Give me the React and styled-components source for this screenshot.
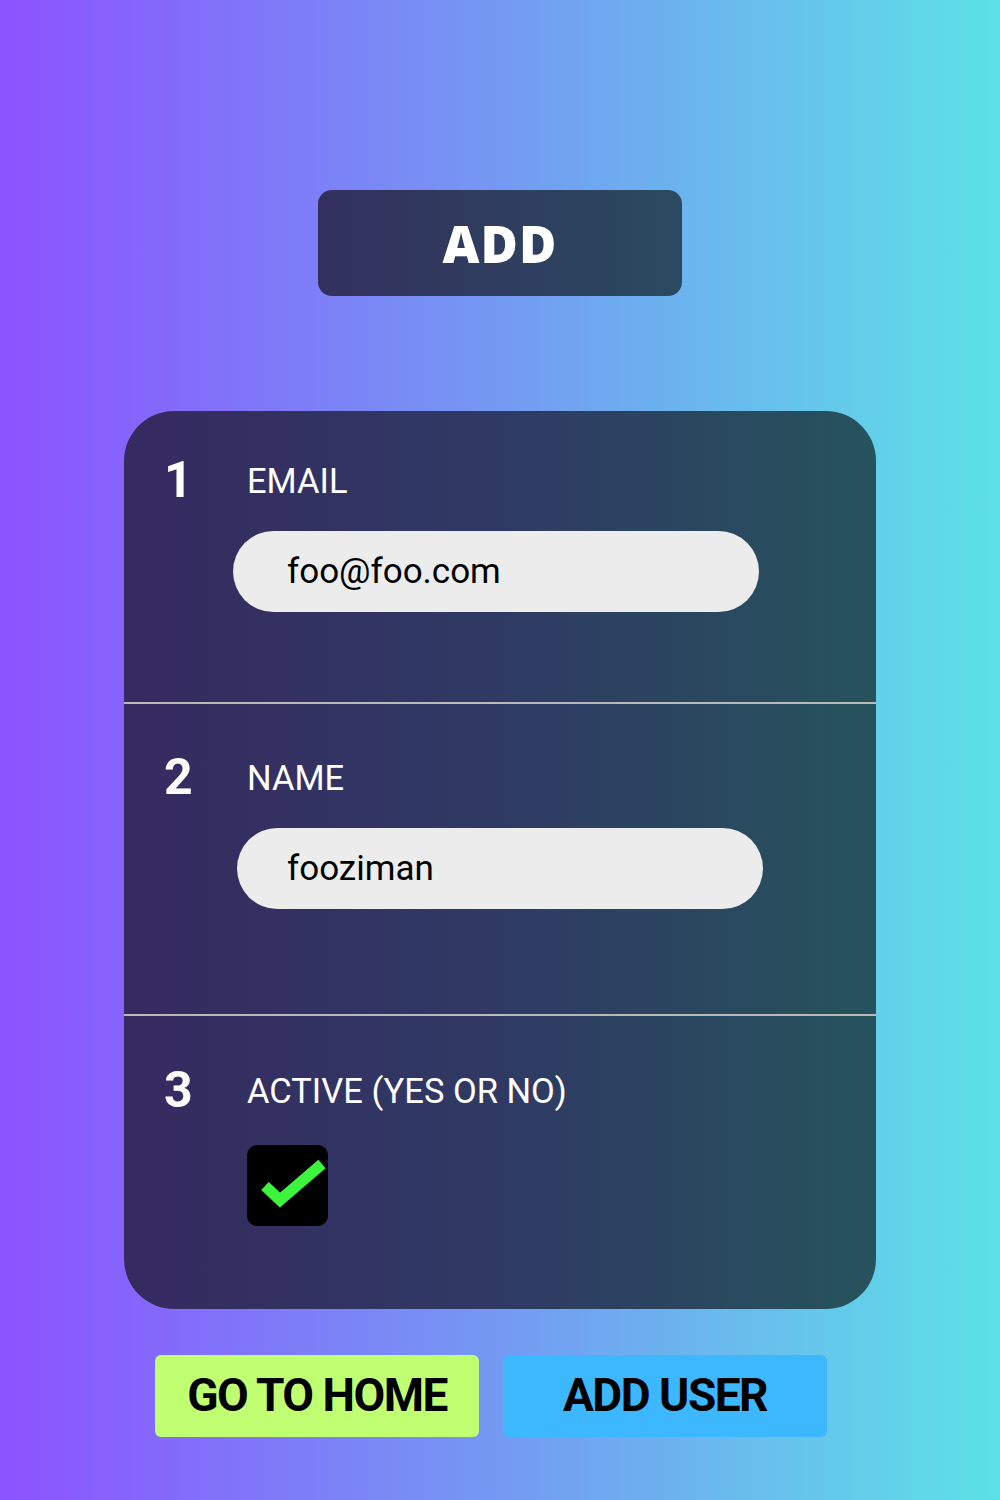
import styled, { createGlobalStyle } from "styled-components";

const GlobalStyle = createGlobalStyle`
  html, body {
    margin: 0;
    padding: 0;
  }
  body {
    font-family: Roboto, "Liberation Sans", sans-serif;
  }
`;

const fields = [
  { num: "1", label: "EMAIL", value: "foo@foo.com", pad: 44, height: 293, inputShift: 0 },
  { num: "2", label: "NAME", value: "fooziman", pad: 48, height: 312, inputShift: 4 },
];

const App = () => {
  return (
    <Page>
      <GlobalStyle />
      <TitleBox>ADD</TitleBox>
      <Card>
        {fields.map((f) => (
          <Section key={f.num} $pad={f.pad} $height={f.height} $divider>
            <Header>
              <Num>{f.num}</Num>
              <Label>{f.label}</Label>
            </Header>
            <Input $shift={f.inputShift} defaultValue={f.value} />
          </Section>
        ))}
        <Section $pad={49} $height={293}>
          <Header>
            <Num>3</Num>
            <Label>ACTIVE (YES OR NO)</Label>
          </Header>
          <CheckBox>
            <svg width="81" height="81" viewBox="0 0 81 81">
              <polyline
                points="18,41 33,55 75,19"
                fill="none"
                stroke="#3df53d"
                strokeWidth="11"
                strokeLinejoin="miter"
              />
            </svg>
          </CheckBox>
        </Section>
      </Card>
      <Actions>
        <ActionButton $bg="#c1ff72">GO TO HOME</ActionButton>
        <ActionButton $bg="#3db8ff">ADD USER</ActionButton>
      </Actions>
    </Page>
  );
};

export default App;

const Page = styled.div`
  width: 1000px;
  height: 1500px;
  box-sizing: border-box;
  padding-top: 190px;
  display: flex;
  flex-direction: column;
  align-items: center;
  background: linear-gradient(90deg, #8c52ff 0%, #5ce1e6 100%);
  overflow: hidden;
`;

const TitleBox = styled.div`
  width: 364px;
  height: 106px;
  border-radius: 14px;
  background: linear-gradient(90deg, #33305e, #2b4a60);
  display: flex;
  align-items: center;
  justify-content: center;
  color: #fff;
  font-family: "Open Sans", sans-serif;
  font-weight: 800;
  font-size: 51px;
  letter-spacing: 1px;
`;

const Card = styled.div`
  margin-top: 115px;
  width: 752px;
  border-radius: 50px;
  background: linear-gradient(90deg, #362a60 0%, #2f3a64 50%, #26535c 100%);
  display: flex;
  flex-direction: column;
  overflow: hidden;
`;

const Section = styled.div`
  box-sizing: border-box;
  height: ${(p) => p.$height}px;
  padding: ${(p) => p.$pad}px 40px 0 40px;
  border-bottom: ${(p) => (p.$divider ? "2px solid #b9b9b9" : "none")};
  display: flex;
  flex-direction: column;
  gap: 26px;
`;

const Header = styled.div`
  display: flex;
  align-items: flex-start;
  height: 50px;
`;

const Num = styled.div`
  width: 83px;
  font-size: 50px;
  line-height: 50px;
  font-weight: 700;
  color: #fff;
`;

const Label = styled.div`
  margin-top: 6px;
  font-size: 34.5px;
  line-height: 40px;
  color: #fff;
`;

const Input = styled.input`
  box-sizing: border-box;
  margin-left: ${(p) => 69 + p.$shift}px;
  width: 526px;
  height: 81px;
  border: none;
  outline: none;
  border-radius: 41px;
  background: #ececec;
  padding: 0 0 0 ${(p) => 54 - p.$shift}px;
  font-family: Roboto, sans-serif;
  font-size: 35px;
  color: #000;
`;

const CheckBox = styled.div`
  margin-top: 4px;
  margin-left: 83px;
  width: 81px;
  height: 81px;
  border-radius: 10px;
  background: #000;
  display: flex;
  overflow: hidden;
`;

const Actions = styled.div`
  margin-top: 46px;
  display: flex;
  gap: 24px;
  margin-left: -18px;
`;

const ActionButton = styled.button`
  width: 324px;
  height: 82px;
  border: none;
  border-radius: 6px;
  background: ${(p) => p.$bg};
  color: #000;
  font-family: Roboto, sans-serif;
  font-weight: 700;
  font-size: 46px;
  letter-spacing: -1.5px;
  display: flex;
  align-items: center;
  justify-content: center;
  padding: 0 0 2px;
`;
